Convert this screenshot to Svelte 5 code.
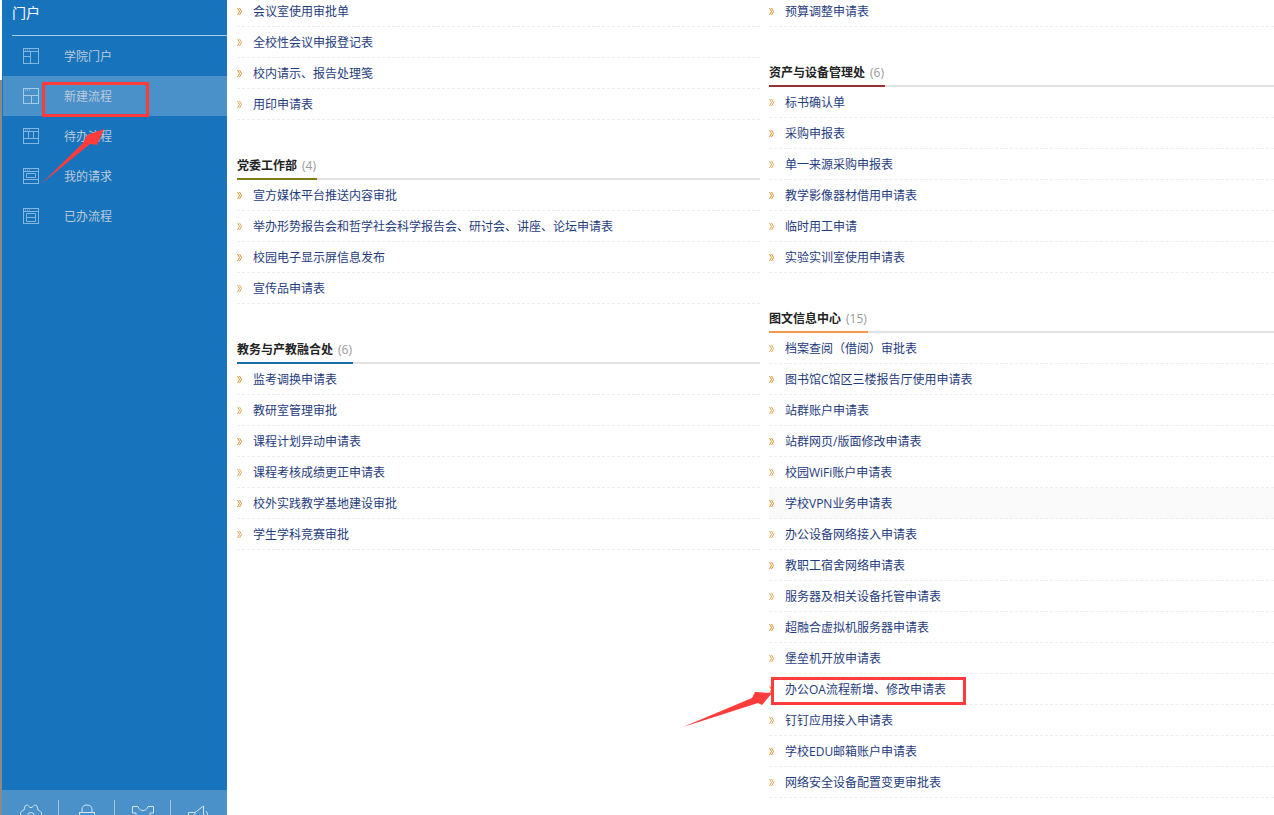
<script>
  const navItems = [
    { label: "学院门户", panes: "M1 3.5H15M7.5 3.5V15M1 8.5H7.5" },
    { label: "新建流程", panes: "M1 7.5H15M8.5 7.5V15", active: true },
    { label: "待办流程", panes: "M1 3.5H15M1 10.5H15M5.5 3.5V10.5M10.5 3.5V10.5" },
    { label: "我的请求", panes: "M1 3.5H15M3.5 5.5H12.5V9.5H3.5ZM1 11.5H15" },
    { label: "已办流程", panes: "M1 3.5H15M3.5 5.5H12.5V9.5H3.5ZM3.5 9.5H12.5V13.5H3.5Z" },
  ]

  const leftCol = [
    { rows: ["会议室使用审批单", "全校性会议申报登记表", "校内请示、报告处理笺", "用印申请表"] },
    {
      title: "党委工作部", color: "#7f7a1e",
      rows: ["宣方媒体平台推送内容审批", "举办形势报告会和哲学社会科学报告会、研讨会、讲座、论坛申请表", "校园电子显示屏信息发布", "宣传品申请表"],
    },
    {
      title: "教务与产教融合处", color: "#1a6ea8",
      rows: ["监考调换申请表", "教研室管理审批", "课程计划异动申请表", "课程考核成绩更正申请表", "校外实践教学基地建设审批", "学生学科竞赛审批"],
    },
  ]

  const rightCol = [
    { rows: ["预算调整申请表"] },
    {
      title: "资产与设备管理处", color: "#963232", paleFirst: true,
      rows: ["标书确认单", "采购申报表", "单一来源采购申报表", "教学影像器材借用申请表", "临时用工申请", "实验实训室使用申请表"],
    },
    {
      title: "图文信息中心", color: "#f59a4a", paleFirst: true, hoverRow: 5,
      rows: ["档案查阅（借阅）审批表", "图书馆C馆区三楼报告厅使用申请表", "站群账户申请表", "站群网页/版面修改申请表", "校园WiFi账户申请表", "学校VPN业务申请表", "办公设备网络接入申请表", "教职工宿舍网络申请表", "服务器及相关设备托管申请表", "超融合虚拟机服务器申请表", "堡垒机开放申请表", "办公OA流程新增、修改申请表", "钉钉应用接入申请表", "学校EDU邮箱账户申请表", "网络安全设备配置变更审批表"],
    },
  ]

  const columns = [leftCol, rightCol]
</script>

<div class="page">
  <div class="edge"></div>

  <aside class="sidebar">
    <div class="brand">门户</div>
    <ul class="nav">
      {#each navItems as item}
        <li class:active={item.active}>
          <svg class="nav-icon" width="16" height="16" viewBox="0 0 16 16" fill="none" stroke="currentColor">
            <rect x="0.5" y="0.5" width="15" height="15" />
            <path d={item.panes} />
            <path d="M2 2H3M4 2H5M6 2H7" />
          </svg>
          <span>{item.label}</span>
        </li>
      {/each}
    </ul>

    <div class="toolbar">
      <div class="tool">
        <svg width="24" height="24" viewBox="0 0 24 24" fill="none" stroke="currentColor">
          <path d="M6 2C8 0.5 9 1 10 2.5C11 4 13 4 14 2.5C15 1 16 0.5 18 2L19 6C21 7 23 8 22.5 10L20 18H4L1.5 10C1 8 3 7 5 6Z" />
          <circle cx="12" cy="12" r="3.5" />
        </svg>
      </div>
      <div class="tool">
        <svg width="20" height="24" viewBox="0 0 20 24" fill="none" stroke="currentColor">
          <path d="M5 8V5.5C5 2.5 7 1 10 1S15 2.5 15 5.5V8" />
          <rect x="2.5" y="8.5" width="15" height="12" />
        </svg>
      </div>
      <div class="tool">
        <svg width="24" height="24" viewBox="0 0 24 24" fill="none" stroke="currentColor">
          <path d="M1.5 2.5H7C8 5.5 10 6.5 12 6.5S16 5.5 17 2.5H22.5V9H19V20H5V9H1.5Z" />
        </svg>
      </div>
      <div class="tool">
        <svg width="24" height="24" viewBox="0 0 24 24" fill="none" stroke="currentColor">
          <path d="M1.5 8.5H8L16.5 2V20L8 15H1.5ZM8 8.5V15" />
          <path d="M19 7C21 9 21 13 19 15" />
        </svg>
      </div>
    </div>
  </aside>

  <main class="content">
    {#each columns as sections}
      <div class="column">
        {#each sections as section}
          <section class:pale-first={section.paleFirst}>
            {#if section.title}
              <h3 class="section-head">
                <span class="section-title" style="border-color: {section.color}">
                  {section.title}<em>({section.rows.length})</em>
                </span>
              </h3>
            {/if}
            <ul class="rows">
              {#each section.rows as row, i}
                <li class:hover={section.hoverRow === i}>
                  <svg class="chevron" width="5" height="9" viewBox="0 0 5 9" fill="none" stroke="#d98f25">
                    <path d="M0.5 1L2.5 4.5L0.5 8M2.5 1L4.5 4.5L2.5 8" />
                  </svg>
                  <span>{row}</span>
                </li>
              {/each}
            </ul>
          </section>
        {/each}
      </div>
    {/each}
  </main>

  <!-- annotations drawn over the screenshot -->
  <div class="mark mark-nav"></div>
  <div class="mark mark-row"></div>
  <svg class="arrows" width="1274" height="815" viewBox="0 0 1274 815">
    <path d="M41 184L83 143L87 135L104 129L97 145L90 144Z" />
    <path d="M683 727L752 698L755 692L772 693L762 705L758 703Z" />
  </svg>
</div>

<style>
  :global(body) { margin: 0; background: #fff; }

  .page {
    position: relative;
    display: flex;
    height: 815px;
    overflow: hidden;
    font-family: "Open Sans", "Noto Sans CJK SC", sans-serif;
    font-size: 12px;
  }

  .edge {
    width: 2px;
    flex: none;
    margin-top: 80px;
    background: #8a8a8a;
  }

  .sidebar {
    width: 225px;
    flex: none;
    display: flex;
    flex-direction: column;
    background: #1873bd;
  }

  .brand {
    height: 35px;
    margin-left: 10px;
    border-bottom: 1px solid #a9cbe6;
    color: #fff;
    font-size: 14px;
    line-height: 26px;
  }

  ul { list-style: none; margin: 0; padding: 0; }

  .nav li {
    height: 40px;
    margin-left: 1px;
    padding-left: 20px;
    display: flex;
    align-items: center;
    color: #bccbd9;
  }
  .nav li.active { background: #4a90c9; }

  .nav-icon { color: #86b6de; margin-right: 25px; flex: none; }
  .nav li.active .nav-icon { color: #a5cbe8; }

  .toolbar {
    margin-top: auto;
    height: 25px;
    padding-left: 1px;
    display: flex;
    background: #4a90c9;
    overflow: hidden;
  }

  .tool {
    width: 56px;
    height: 15px;
    margin-top: 10px;
    padding-top: 4px;
    display: flex;
    justify-content: center;
    color: #d3e4f2;
    border-right: 1px solid #a8c4dc;
    box-sizing: border-box;
  }
  .tool:last-child { border-right: 0; }

  .content {
    flex: 1;
    min-width: 0;
    margin-top: -4px;
    padding-left: 10px;
    display: grid;
    grid-template-columns: 523px 1fr;
    column-gap: 9px;
    align-items: start;
  }

  .section-head {
    height: 28px;
    margin: 30px 0 0;
    border-bottom: 2px solid #e2e2e2;
    font-size: 12px;
    font-weight: 700;
    color: #222;
  }

  .section-title {
    display: inline-block;
    height: 28px;
    padding-right: 1px;
    border-bottom: 2px solid;
    line-height: 31px;
  }
  .section-title em {
    margin-left: 5px;
    font-style: normal;
    font-weight: 400;
    color: #999;
  }

  .rows li {
    height: 30px;
    display: flex;
    align-items: center;
    border-bottom: 1px dashed #eee;
    color: #1f3c7d;
  }
  .rows li.hover { background: #fafafa; }

  .chevron { flex: none; margin-right: 11px; }

  .rows li:nth-child(even) .chevron { opacity: 0.8; }
  .pale-first .rows li:nth-child(odd) .chevron { opacity: 0.8; }
  .pale-first .rows li:nth-child(even) .chevron { opacity: 1; }

  .mark {
    position: absolute;
    box-sizing: border-box;
    border: 3px solid #ff3b3b;
  }
  .mark-nav { left: 42px; top: 82px; width: 107px; height: 35px; }
  .mark-row { left: 771px; top: 677px; width: 195px; height: 28px; }

  .arrows { position: absolute; left: 0; top: 0; fill: #ff3b3b; pointer-events: none; }
</style>
